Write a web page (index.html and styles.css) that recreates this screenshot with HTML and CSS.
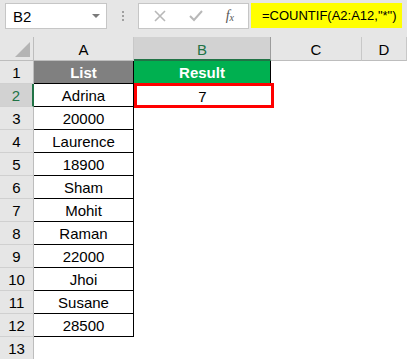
FILE: index.html
```html
<!doctype html>
<html lang="en">
<head>
    <meta charset="UTF-8" />
    <title>COUNTIF</title>
    <link rel="stylesheet" href="styles.css">
</head>
<body>
<div class="topbar">
    <div class="namebox">
        <span>B2</span>
        <span class="caret"></span>
    </div>
    <div class="dots"><i></i><i></i><i></i></div>
    <div class="fxbox">
        <svg class="ico" width="14" height="14" viewBox="0 0 14 14"><path d="M2 2 L12 12 M12 2 L2 12" stroke="#b8b8b8" stroke-width="1.6" fill="none"/></svg>
        <svg class="ico" width="16" height="14" viewBox="0 0 16 14"><path d="M2 7 L6 11 L14 2" stroke="#b8b8b8" stroke-width="2" fill="none"/></svg>
        <span class="fx">f<sub>x</sub></span>
    </div>
    <div class="formula">=COUNTIF(A2:A12,"*")</div>
</div>
<div class="sheet">
    <div class="corner"><span class="tri"></span></div>
    <div class="colhead">A</div>
    <div class="colhead sel">B</div>
    <div class="colhead">C</div>
    <div class="colhead">D</div>

    <div class="rowhead">1</div>
    <div class="cell a hdr-gray">List</div>
    <div class="cell b1 hdr-green">Result</div>
    <div class="cell"></div>
    <div class="cell"></div>

    <div class="rowhead sel">2</div>
    <div class="cell a">Adrina</div>
    <div class="cell active">7</div>
    <div class="cell"></div>
    <div class="cell"></div>

    <div class="rowhead">3</div>
    <div class="cell a">20000</div>
    <div class="cell"></div><div class="cell"></div><div class="cell"></div>

    <div class="rowhead">4</div>
    <div class="cell a">Laurence</div>
    <div class="cell"></div><div class="cell"></div><div class="cell"></div>

    <div class="rowhead">5</div>
    <div class="cell a">18900</div>
    <div class="cell"></div><div class="cell"></div><div class="cell"></div>

    <div class="rowhead">6</div>
    <div class="cell a">Sham</div>
    <div class="cell"></div><div class="cell"></div><div class="cell"></div>

    <div class="rowhead">7</div>
    <div class="cell a">Mohit</div>
    <div class="cell"></div><div class="cell"></div><div class="cell"></div>

    <div class="rowhead">8</div>
    <div class="cell a">Raman</div>
    <div class="cell"></div><div class="cell"></div><div class="cell"></div>

    <div class="rowhead">9</div>
    <div class="cell a">22000</div>
    <div class="cell"></div><div class="cell"></div><div class="cell"></div>

    <div class="rowhead">10</div>
    <div class="cell a">Jhoi</div>
    <div class="cell"></div><div class="cell"></div><div class="cell"></div>

    <div class="rowhead">11</div>
    <div class="cell a">Susane</div>
    <div class="cell"></div><div class="cell"></div><div class="cell"></div>

    <div class="rowhead">12</div>
    <div class="cell a">28500</div>
    <div class="cell"></div><div class="cell"></div><div class="cell"></div>

    <div class="rowhead">13</div>
    <div class="cell"></div>
    <div class="cell"></div><div class="cell"></div><div class="cell"></div>
</div>
</body>
</html>
```

FILE: styles.css
```css
html,body {
    margin: 0;
    padding: 0;
    background: white;
    font-family: "Liberation Sans", Arial, sans-serif;
    font-size: 14px;
    color: #000;
}
.topbar {
    background: #e6e6e6;
    height: 37px;
    display: flex;
    align-items: flex-start;
    padding: 3px 0 0 5px;
    box-sizing: border-box;
}
.namebox {
    width: 102px;
    height: 26px;
    box-sizing: border-box;
    background: white;
    border: 1px solid #c6c6c6;
    display: flex;
    align-items: center;
    justify-content: space-between;
    padding: 0 6px 0 7px;
    font-size: 15px;
}
.caret {
    width: 0;
    height: 0;
    border-left: 4px solid transparent;
    border-right: 4px solid transparent;
    border-top: 4px solid #7a7a7a;
}
.dots {
    width: 31px;
    height: 26px;
    display: flex;
    flex-direction: column;
    align-items: center;
    justify-content: center;
    gap: 2px;
}
.dots i {
    width: 2px;
    height: 2px;
    background: #a0a0a0;
}
.fxbox {
    width: 111px;
    height: 26px;
    box-sizing: border-box;
    background: white;
    border: 1px solid #c6c6c6;
    display: flex;
    align-items: center;
    justify-content: space-between;
    padding: 0 14px 0 14px;
    margin-right: 2px;
}
.fx {
    font-family: "Liberation Serif", serif;
    font-style: italic;
    font-size: 14px;
    color: #555;
}
.fx sub {
    font-size: 10px;
    vertical-align: -1px;
}
.formula {
    width: 151px;
    height: 25px;
    background: #ffff00;
    display: flex;
    align-items: center;
    padding-left: 11px;
    box-sizing: border-box;
    font-size: 13px;
    white-space: nowrap;
    overflow: hidden;
}
.sheet {
    display: grid;
    grid-template-columns: 34px 100px 137px 91px 45px;
    grid-template-rows: 24px;
    grid-auto-rows: 23px;
    font-size: 15px;
}
.corner {
    background: #e6e6e6;
    border-right: 1px solid #bdbdbd;
    border-bottom: 1px solid #bdbdbd;
    display: flex;
    align-items: flex-end;
    justify-content: flex-end;
    padding: 0 3px 3px 0;
}
.tri {
    width: 0;
    height: 0;
    border-left: 15px solid transparent;
    border-bottom: 15px solid #b4b4b4;
}
.colhead {
    background: #e6e6e6;
    border-right: 1px solid #c8c8c8;
    border-bottom: 1px solid #bdbdbd;
    display: flex;
    align-items: center;
    justify-content: center;
    padding-top: 2px;
}
.colhead.sel {
    background: #d2d2d2;
    color: #217346;
    border-bottom: 2px solid #217346;
    border-right-color: #9c9c9c;
}
.rowhead {
    background: #e6e6e6;
    border-right: 1px solid #bdbdbd;
    border-bottom: 1px solid #d0d0d0;
    display: flex;
    align-items: center;
    justify-content: center;
    padding-top: 1px;
}
.rowhead.sel {
    background: #d2d2d2;
    color: #217346;
    border-right: 2px solid #217346;
}
.cell {
    display: flex;
    align-items: center;
    justify-content: center;
    padding-top: 1px;
}
.cell.a {
    border-right: 1px solid #000;
    border-bottom: 1px solid #000;
}
.hdr-gray {
    background: #808080;
    color: white;
    font-weight: bold;
}
.hdr-green {
    background: #00b050;
    color: white;
    font-weight: bold;
}
.cell.b1 {
    border-right: 1px solid #000;
    border-bottom: 1px solid #217346;
}
.cell.active {
    position: relative;
}
.cell.active::after {
    content: "";
    position: absolute;
    top: -1px;
    left: 0;
    right: -3px;
    bottom: -1px;
    border: 3px solid #ff0000;
}
```
